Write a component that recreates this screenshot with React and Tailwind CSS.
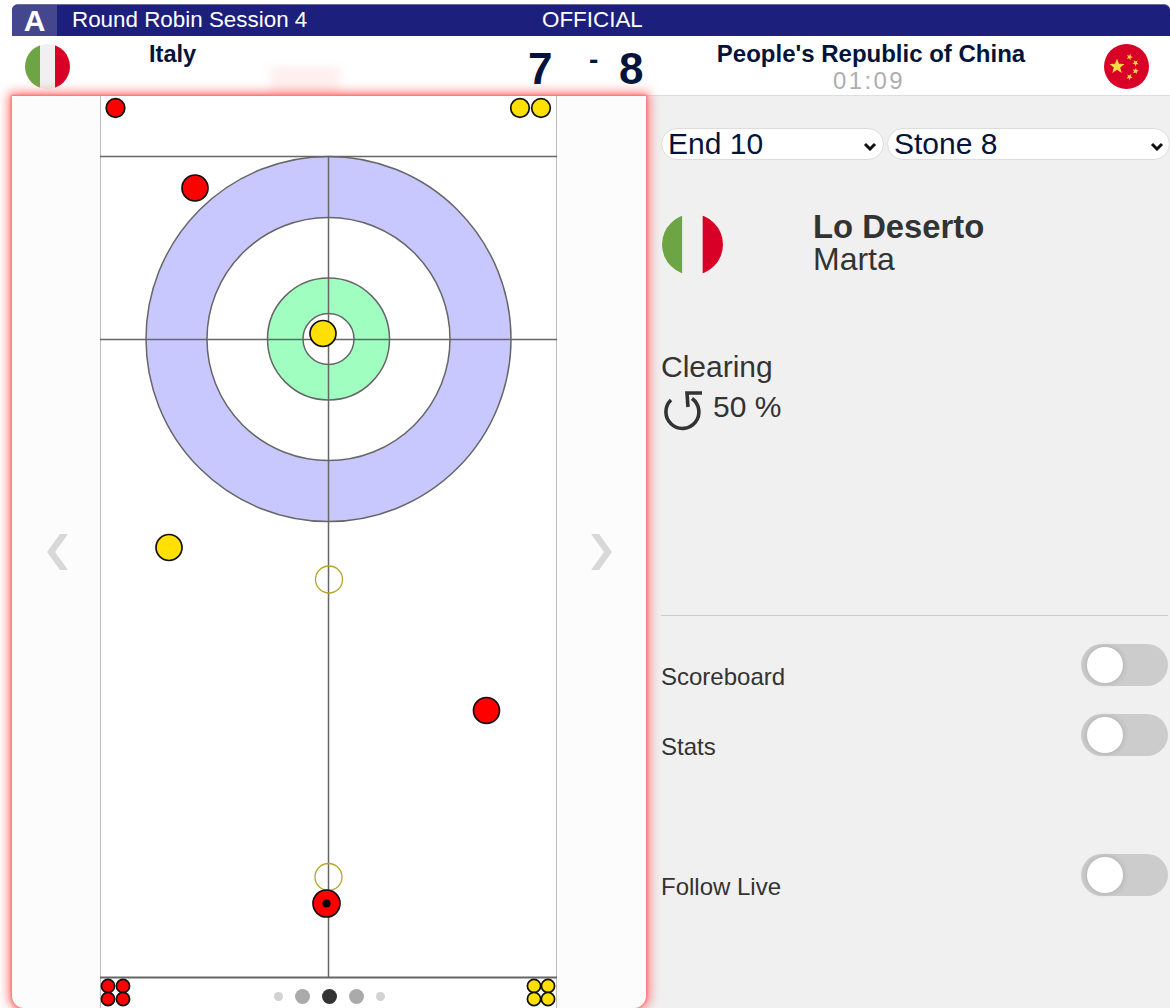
import React from 'react';

const RED = '#ff0000';
const YELLOW = '#ffe000';

// stones in page coordinates, the sheet svg's viewBox starts at the sheet's corner
const playedStones = [
    { x: 195, y: 188, fill: RED },
    { x: 323, y: 333.5, fill: YELLOW },
    { x: 169, y: 547.5, fill: YELLOW },
    { x: 486.5, y: 710.5, fill: RED },
];
const topStones = [
    { x: 115.5, y: 108, fill: RED },
    { x: 520, y: 108, fill: YELLOW },
    { x: 541, y: 108, fill: YELLOW },
];
const bottomStones = [
    { x: 108, y: 986, fill: RED },
    { x: 123, y: 986, fill: RED },
    { x: 108, y: 999, fill: RED },
    { x: 123, y: 999, fill: RED },
    { x: 534, y: 986, fill: YELLOW },
    { x: 548, y: 986, fill: YELLOW },
    { x: 534, y: 999, fill: YELLOW },
    { x: 548, y: 999, fill: YELLOW },
];

function ItalyFlag({ size, white = '#f0f0f0' }) {
    return (
        <svg width={size} height={size} viewBox="0 0 60 60" className="block shrink-0">
            <defs>
                <clipPath id={`it-${size}`}>
                    <circle cx="30" cy="30" r="30" />
                </clipPath>
            </defs>
            <g clipPath={`url(#it-${size})`}>
                <rect x="0" y="0" width="20" height="60" fill="#6da544" />
                <rect x="20" y="0" width="20" height="60" fill={white} />
                <rect x="40" y="0" width="20" height="60" fill="#d80027" />
            </g>
        </svg>
    );
}

function Star({ cx, cy, r, rot = 0 }) {
    const pts = Array.from({ length: 10 }, (_, i) => {
        const a = ((i * 36 + rot - 90) * Math.PI) / 180;
        const d = i % 2 === 0 ? r : r * 0.42;
        return `${cx + d * Math.cos(a)},${cy + d * Math.sin(a)}`;
    }).join(' ');
    return <polygon points={pts} fill="#ffda44" />;
}

function ChinaFlag() {
    return (
        <svg width="45" height="45" viewBox="0 0 45 45" className="block shrink-0">
            <circle cx="22.5" cy="22.5" r="22.5" fill="#d80027" />
            <Star cx={13} cy={22.5} r={8} />
            <Star cx={25.5} cy={13} r={3.4} rot={20} />
            <Star cx={31.5} cy={19} r={3.4} rot={40} />
            <Star cx={31.5} cy={27} r={3.4} rot={10} />
            <Star cx={25.5} cy={33} r={3.4} rot={30} />
        </svg>
    );
}

function Stone({ x, y, fill, r = 13 }) {
    return <circle cx={x} cy={y} r={r} fill={fill} stroke="#111" strokeWidth="1.7" />;
}

function Sheet() {
    return (
        <svg width="457" height="912" viewBox="100 96 457 912" className="block">
            <rect x="100" y="96" width="457" height="912" fill="#fff" />
            <line x1="100.5" y1="96" x2="100.5" y2="1008" stroke="#bbbbbb" />
            <line x1="556.5" y1="96" x2="556.5" y2="1008" stroke="#bbbbbb" />

            <g stroke="#666" strokeWidth="1.5">
                <circle cx="328.5" cy="339" r="182.5" fill="#c8c8ff" />
                <circle cx="328.5" cy="339" r="121.5" fill="#fff" />
                <circle cx="328.5" cy="339" r="61" fill="#a0ffc0" />
                <circle cx="328.5" cy="339" r="25.5" fill="#fff" />

                <line x1="100" y1="156.5" x2="557" y2="156.5" />
                <line x1="100" y1="339.5" x2="557" y2="339.5" />
                <line x1="328.5" y1="157" x2="328.5" y2="977" />
                <line x1="100" y1="977.5" x2="557" y2="977.5" strokeWidth="2" />
            </g>

            <circle cx="329" cy="579.5" r="13.5" fill="none" stroke="#b5a62a" strokeWidth="1.3" />
            <circle cx="328.5" cy="877" r="13.5" fill="none" stroke="#b5a62a" strokeWidth="1.3" />

            {playedStones.map((s) => (
                <Stone key={`${s.x}-${s.y}`} {...s} />
            ))}
            <Stone x={326.5} y={903.5} fill={RED} r={13.5} />
            <circle cx="326.5" cy="903.5" r="4" fill="#000" />

            {topStones.map((s) => (
                <Stone key={`${s.x}-${s.y}`} {...s} r={9.3} />
            ))}
            {bottomStones.map((s) => (
                <Stone key={`${s.x}-${s.y}`} {...s} r={6.6} />
            ))}
        </svg>
    );
}

function Chevron({ flip }) {
    return (
        <svg width="22" height="36" viewBox="0 0 22 36" className={flip ? 'block -scale-x-100' : 'block'}>
            <polygon points="0,18 13,0 21,0 8,18 21,36 13,36" fill="#d8d8d8" />
        </svg>
    );
}

function SelectBox({ label, className, arrowClass }) {
    return (
        <div className={`relative ${className}`}>
            <select className="block appearance-none w-full h-8 bg-white rounded-2xl border border-[#dddddd] pl-[6px] text-[30px] leading-[30px]">
                <option>{label}</option>
            </select>
            <svg
                width="14"
                height="9"
                viewBox="0 0 14 9"
                fill="none"
                stroke="#111"
                strokeWidth="3"
                className={`absolute top-[14px] pointer-events-none ${arrowClass}`}
            >
                <path d="M2 2 L7 7 L12 2" />
            </svg>
        </div>
    );
}

function Toggle() {
    return (
        <div className="w-[87px] h-[42px] rounded-full bg-[#cccccc] flex items-center pl-[6px] shrink-0">
            <div className="w-9 h-9 rounded-full bg-white shadow-[0_0_6px_rgba(0,0,0,0.18)]" />
        </div>
    );
}

function ToggleRow({ label, className = '' }) {
    return (
        <div className={`flex justify-between h-[42px] pr-[2px] ${className}`}>
            <span className="text-[24px] leading-[28px] mt-[19px] text-[#333]">{label}</span>
            <Toggle />
        </div>
    );
}

function RotationIcon() {
    return (
        <svg width="42" height="42" viewBox="0 0 42 42" fill="none" stroke="#333" strokeWidth="3.6" className="block shrink-0">
            <path d="M9 9 A16.5 16.5 0 1 0 30 7.5" />
            <path d="M40 2 H25 L26 16" />
        </svg>
    );
}

export default function App() {
    return (
        <div className="relative w-[1170px] h-[1008px] overflow-hidden bg-white font-['Liberation_Sans',Arial,sans-serif]">
            {/* Header bar */}
            <div className="mt-1 ml-3 h-8 bg-[#1c1f7c] rounded-t-md border-t border-[#6a6c9c] flex items-center text-white text-[22.4px] leading-none">
                <div className="w-[45px] h-full bg-[#45478e] rounded-tl-md flex items-center justify-center font-bold text-[30px]">
                    A
                </div>
                <span className="ml-[15px] w-[470px]">Round Robin Session 4</span>
                <span>OFFICIAL</span>
            </div>

            {/* Team and score row */}
            <div className="relative ml-3 h-[60px] flex text-[#04133a] border-b border-[#dddddd]">
                <div className="ml-[13px] mt-2">
                    <ItalyFlag size={45} />
                </div>
                <div className="ml-[79px] w-[379px] pt-[3px] text-[23.6px] leading-[30px] font-bold">Italy</div>
                <div className="w-[61px] text-[44px] leading-[50px] font-bold mt-[8px]">7</div>
                <div className="w-[30px] text-[28px] leading-[32px] font-bold mt-[8px]">-</div>
                <div className="w-[70px] text-[44px] leading-[50px] font-bold mt-[8px]">8</div>
                <div className="w-[364px] pt-[3px] text-center">
                    <div className="text-[24px] leading-[30px] font-bold">People's Republic of China</div>
                    <div className="text-[24px] leading-[24px] tracking-[2.4px] text-[#aeaeae] -ml-1">01:09</div>
                </div>
                <div className="ml-[51px] mt-2">
                    <ChinaFlag />
                </div>
                <div className="absolute left-[258px] top-[30px] w-[70px] h-[34px] bg-[#fff0f0] blur-[4px]" />
            </div>

            {/* Main area */}
            <div className="ml-3 flex h-[912px]">
                <div className="relative z-10 w-[634px] h-full bg-[#fcfcfc] rounded-b-xl shadow-[0_0_3px_1px_#ff7070,0_0_12px_3px_#ff7070] flex">
                    <div className="w-[88px] flex items-center justify-center pl-[3px]">
                        <Chevron />
                    </div>
                    <div className="relative w-[457px]">
                        <Sheet />
                        <div className="absolute left-0 right-0 bottom-1 flex items-center justify-center gap-3 pl-px">
                            <span className="w-[9px] h-[9px] rounded-full bg-[#d2d2d2]" />
                            <span className="w-[15px] h-[15px] rounded-full bg-[#aaaaaa]" />
                            <span className="w-[15px] h-[15px] rounded-full bg-[#333333]" />
                            <span className="w-[15px] h-[15px] rounded-full bg-[#aaaaaa]" />
                            <span className="w-[9px] h-[9px] rounded-full bg-[#d2d2d2]" />
                        </div>
                    </div>
                    <div className="w-[89px] flex items-center justify-center pr-[1px]">
                        <Chevron flip />
                    </div>
                </div>

                {/* Side panel */}
                <div className="flex-1 bg-[#f0f0f0] pl-[15px] pt-[32px] text-[#333]">
                    <div className="flex gap-[3px] text-[#04133a]">
                        <SelectBox label="End 10" className="w-[223px]" arrowClass="right-[7px]" />
                        <SelectBox label="Stone 8" className="w-[283px]" arrowClass="right-[6px]" />
                    </div>

                    <div className="flex mt-[54px] ml-px">
                        <ItalyFlag size={61} />
                        <div className="ml-[90px] -mt-[4px] leading-[33px]">
                            <div className="font-bold text-[32.8px]">Lo Deserto</div>
                            <div className="text-[32px]">Marta</div>
                        </div>
                    </div>

                    <div className="mt-[73px] text-[30px] leading-[36px]">Clearing</div>
                    <div className="flex mt-[6px] ml-px">
                        <RotationIcon />
                        <span className="ml-[9px] -mt-[2px] text-[30px] leading-[36px]">50 %</span>
                    </div>

                    <div className="mt-[182px] h-px bg-[#cccccc] mr-[2px]" />

                    <ToggleRow label="Scoreboard" className="mt-[28px]" />
                    <ToggleRow label="Stats" className="mt-[28px]" />
                    <ToggleRow label="Follow Live" className="mt-[98px]" />
                </div>
            </div>
        </div>
    );
}
